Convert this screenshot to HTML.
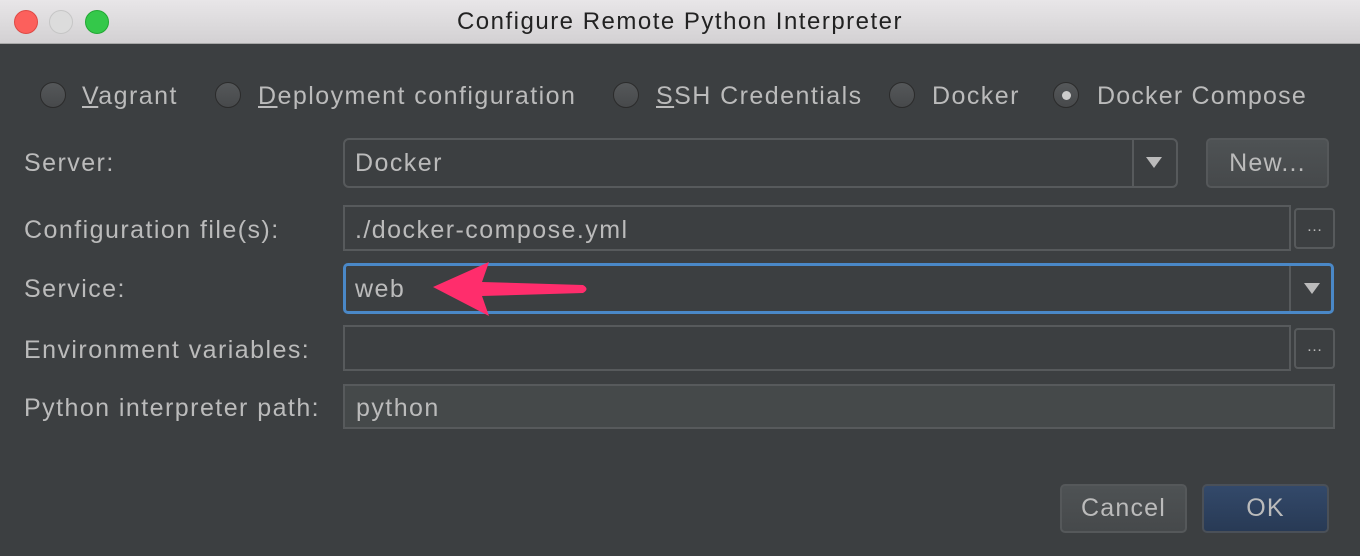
<!DOCTYPE html>
<html><head><style>
body{margin:0;width:1360px;height:556px;background:#3c3f41;font-family:"Liberation Sans",sans-serif;color:#bbbbbb;overflow:hidden;position:relative}
.a{position:absolute}
.title{left:0;top:0;width:1360px;height:44px;background:linear-gradient(#e8e6e8,#d3d1d3);border-bottom:1px solid #a8a8a8;box-sizing:border-box;text-align:center;line-height:44px;font-size:24px;letter-spacing:1.5px;color:#222}
.dot{top:10px;width:24px;height:24px;border-radius:50%;box-sizing:border-box}
.t{font-size:25px;letter-spacing:1.45px;line-height:30px;white-space:nowrap}
.radio{width:26px;height:26px;border-radius:50%;background:linear-gradient(#55585a,#47494b);border:1px solid #2b2b2b;box-sizing:border-box;top:82px}
.f{border:2px solid #575a5c;box-sizing:border-box;border-radius:3px}
.btn{border:2px solid #55585a;border-radius:5px;background:linear-gradient(#4e5254,#46494b);box-sizing:border-box;text-align:center;font-size:25px;letter-spacing:1.2px}
.dd{width:0;height:0;border-left:8px solid transparent;border-right:8px solid transparent;border-top:11px solid #bbb}
.dots{font-size:16px;text-align:center;line-height:34px}
</style></head><body>
<div class="a title">Configure Remote Python Interpreter</div>
<div class="a dot" style="left:14px;background:#fc605c;border:1px solid #de4a45"></div>
<div class="a dot" style="left:49px;background:#dcdcdc;border:1px solid #c6c6c6"></div>
<div class="a dot" style="left:85px;background:#34c84a;border:1px solid #22a834"></div>

<div class="a radio" style="left:40px"></div><div class="a t" style="left:82px;top:81px"><u>V</u>agrant</div>
<div class="a radio" style="left:215px"></div><div class="a t" style="left:258px;top:81px"><u>D</u>eployment configuration</div>
<div class="a radio" style="left:613px"></div><div class="a t" style="left:656px;top:81px"><u>S</u>SH Credentials</div>
<div class="a radio" style="left:889px"></div><div class="a t" style="left:932px;top:81px">Docker</div>
<div class="a radio" style="left:1053px"></div><div class="a" style="left:1062px;top:91px;width:9px;height:9px;border-radius:50%;background:#ccc"></div><div class="a t" style="left:1097px;top:81px;letter-spacing:1.2px">Docker Compose</div>

<div class="a t" style="left:24px;top:148px">Server:</div>
<div class="a f" style="left:343px;top:138px;width:835px;height:50px;border-radius:6px"></div>
<div class="a" style="left:1132px;top:140px;width:2px;height:46px;background:#575a5c"></div>
<div class="a dd" style="left:1146px;top:157px"></div>
<div class="a t" style="left:355px;top:148px">Docker</div>
<div class="a btn" style="left:1206px;top:138px;width:123px;height:50px;line-height:46px">New...</div>

<div class="a t" style="left:24px;top:215px">Configuration file(s):</div>
<div class="a f" style="left:343px;top:205px;width:948px;height:46px;border-radius:0"></div>
<div class="a t" style="left:355px;top:215px">./docker-compose.yml</div>
<div class="a f dots" style="left:1294px;top:208px;width:41px;height:41px;border-radius:4px">…</div>

<div class="a t" style="left:24px;top:274px">Service:</div>
<div class="a" style="left:343px;top:263px;width:991px;height:51px;border:3px solid #4a88c7;border-radius:5px;box-sizing:border-box"></div>
<div class="a" style="left:1289px;top:266px;width:2px;height:45px;background:#575a5c"></div>
<div class="a dd" style="left:1304px;top:283px"></div>
<div class="a t" style="left:355px;top:274px">web</div>
<svg class="a" style="left:0;top:0" width="1360" height="556"><path d="M433 287 L489 262 L482 282 L583 285 Q590 289 583 293 L482 296 L489 316 Z" fill="#ff2d6c"/></svg>

<div class="a t" style="left:24px;top:335px">Environment variables:</div>
<div class="a f" style="left:343px;top:325px;width:948px;height:46px;border-radius:0"></div>
<div class="a f dots" style="left:1294px;top:328px;width:41px;height:41px;border-radius:4px">…</div>

<div class="a t" style="left:24px;top:393px">Python interpreter path:</div>
<div class="a f" style="left:343px;top:384px;width:992px;height:45px;border-radius:0;background:#45494a"></div>
<div class="a t" style="left:356px;top:393px">python</div>

<div class="a btn" style="left:1060px;top:484px;width:127px;height:49px;line-height:45px">Cancel</div>
<div class="a btn" style="left:1202px;top:484px;width:127px;height:49px;line-height:45px;background:linear-gradient(#33496a,#283a55);border-color:#4a5058">OK</div>
</body></html>
